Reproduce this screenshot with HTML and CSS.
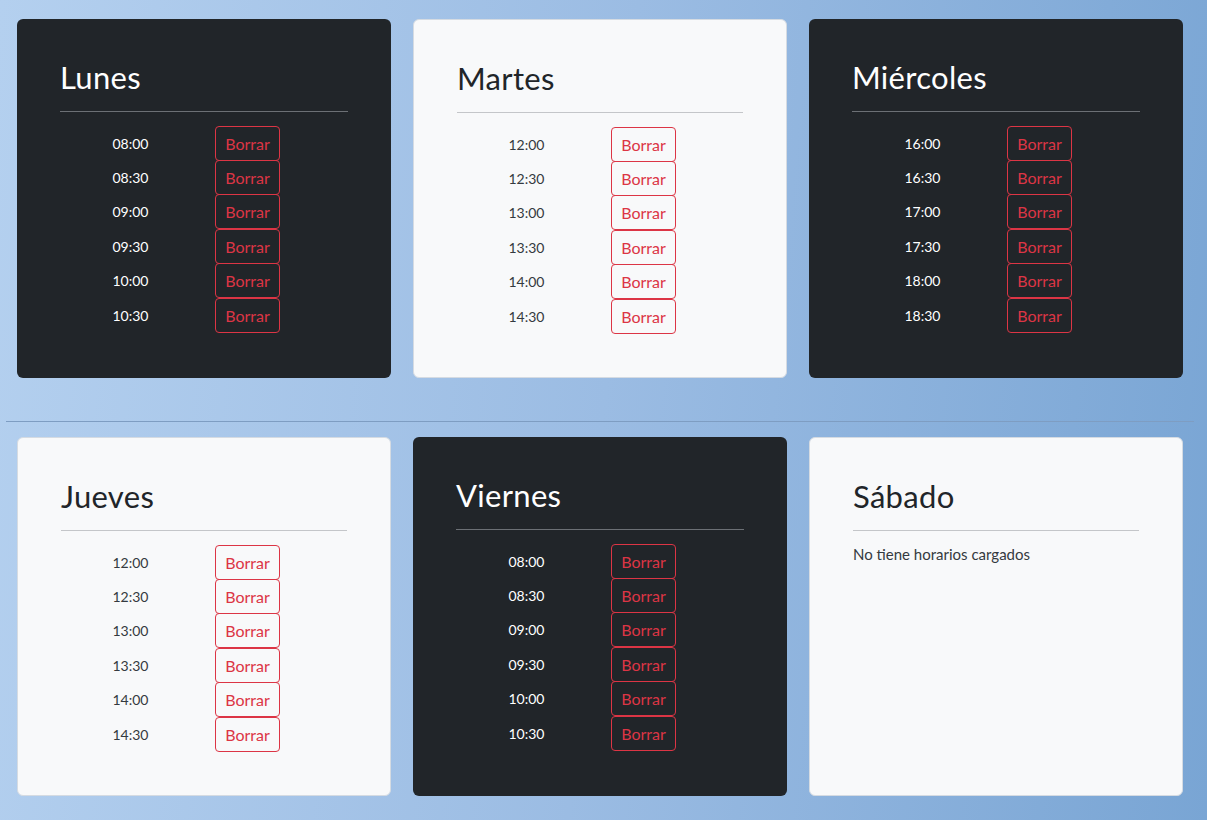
FILE: index.html
```html
<!DOCTYPE html>
<html lang="es">
<head>
<meta charset="utf-8">
<title>Horarios</title>
<link rel="stylesheet" href="styles.css">
</head>
<body>
<div class="wrap">
  <div class="row">
    <div class="card dark">
      <h2 class="title">Lunes</h2>
      <hr class="sep">
      <div class="slots">
        <div class="slot"><span class="time">08:00</span><button class="btn">Borrar</button></div>
        <div class="slot"><span class="time">08:30</span><button class="btn">Borrar</button></div>
        <div class="slot"><span class="time">09:00</span><button class="btn">Borrar</button></div>
        <div class="slot"><span class="time">09:30</span><button class="btn">Borrar</button></div>
        <div class="slot"><span class="time">10:00</span><button class="btn">Borrar</button></div>
        <div class="slot"><span class="time">10:30</span><button class="btn">Borrar</button></div>
      </div>
    </div>
    <div class="card light">
      <h2 class="title">Martes</h2>
      <hr class="sep">
      <div class="slots">
        <div class="slot"><span class="time">12:00</span><button class="btn">Borrar</button></div>
        <div class="slot"><span class="time">12:30</span><button class="btn">Borrar</button></div>
        <div class="slot"><span class="time">13:00</span><button class="btn">Borrar</button></div>
        <div class="slot"><span class="time">13:30</span><button class="btn">Borrar</button></div>
        <div class="slot"><span class="time">14:00</span><button class="btn">Borrar</button></div>
        <div class="slot"><span class="time">14:30</span><button class="btn">Borrar</button></div>
      </div>
    </div>
    <div class="card dark">
      <h2 class="title">Miércoles</h2>
      <hr class="sep">
      <div class="slots">
        <div class="slot"><span class="time">16:00</span><button class="btn">Borrar</button></div>
        <div class="slot"><span class="time">16:30</span><button class="btn">Borrar</button></div>
        <div class="slot"><span class="time">17:00</span><button class="btn">Borrar</button></div>
        <div class="slot"><span class="time">17:30</span><button class="btn">Borrar</button></div>
        <div class="slot"><span class="time">18:00</span><button class="btn">Borrar</button></div>
        <div class="slot"><span class="time">18:30</span><button class="btn">Borrar</button></div>
      </div>
    </div>
  </div>
  <hr class="divider">
  <div class="row">
    <div class="card light">
      <h2 class="title">Jueves</h2>
      <hr class="sep">
      <div class="slots">
        <div class="slot"><span class="time">12:00</span><button class="btn">Borrar</button></div>
        <div class="slot"><span class="time">12:30</span><button class="btn">Borrar</button></div>
        <div class="slot"><span class="time">13:00</span><button class="btn">Borrar</button></div>
        <div class="slot"><span class="time">13:30</span><button class="btn">Borrar</button></div>
        <div class="slot"><span class="time">14:00</span><button class="btn">Borrar</button></div>
        <div class="slot"><span class="time">14:30</span><button class="btn">Borrar</button></div>
      </div>
    </div>
    <div class="card dark">
      <h2 class="title">Viernes</h2>
      <hr class="sep">
      <div class="slots">
        <div class="slot"><span class="time">08:00</span><button class="btn">Borrar</button></div>
        <div class="slot"><span class="time">08:30</span><button class="btn">Borrar</button></div>
        <div class="slot"><span class="time">09:00</span><button class="btn">Borrar</button></div>
        <div class="slot"><span class="time">09:30</span><button class="btn">Borrar</button></div>
        <div class="slot"><span class="time">10:00</span><button class="btn">Borrar</button></div>
        <div class="slot"><span class="time">10:30</span><button class="btn">Borrar</button></div>
      </div>
    </div>
    <div class="card light">
      <h2 class="title">Sábado</h2>
      <hr class="sep">
      <p class="empty">No tiene horarios cargados</p>
    </div>
  </div>
</div>
</body>
</html>
```

FILE: styles.css
```css
html, body {
  margin: 0;
  padding: 0;
}

body {
  min-height: 820px;
  background: linear-gradient(95deg, #b4d0ef 0%, #9bbce3 50%, #79a5d4 100%);
  font-family: Lato, "Open Sans", "Liberation Sans", sans-serif;
  color: #212529;
}

.wrap {
  width: 1188px;
  padding: 19px 0 0 6px;
}

.row {
  display: grid;
  grid-template-columns: repeat(3, 396px);
}

.card {
  margin: 0 11px;
  height: 359px;
  box-sizing: border-box;
  border-radius: 6px;
  padding: 40px 43px 0 43px;
}

.dark {
  background: #212529;
  color: #ffffff;
}

.light {
  background: #f8f9fa;
  border: 1px solid #d5dbe2;
  padding: 40px 43px 0 43px;
}

.light .slots {
  margin-left: -1px;
}

.title {
  margin: 0;
  font-size: 31px;
  line-height: 36px;
  font-weight: 400;
  letter-spacing: 0.3px;
}

.sep {
  margin: 16px 0 0 0;
  border: 0;
  height: 1px;
}

.dark .sep {
  background: #6c7075;
}

.light .sep {
  background: #c4c6c9;
}

.slots {
  margin-top: 14px;
}

.slot {
  display: flex;
  align-items: center;
  height: 34.4px;
}

.time {
  width: 141px;
  text-align: center;
  font-size: 14px;
}

.dark .time {
  color: #ffffff;
}

.light .time {
  color: #343a40;
}

.btn {
  margin-left: 14px;
  height: 35px;
  width: 65px;
  padding: 0;
  border: 1px solid #dc3545;
  border-radius: 4px;
  background: transparent;
  color: #dc3545;
  font-family: Lato, "Open Sans", "Liberation Sans", sans-serif;
  font-size: 16px;
  line-height: 33px;
}

.empty {
  margin: 11px 0 0 0;
  font-size: 15px;
  line-height: 24px;
  color: #343a40;
}

.divider {
  margin: 43px 0 15px 0;
  border: 0;
  height: 1px;
  background: #7e9dc2;
}
```
